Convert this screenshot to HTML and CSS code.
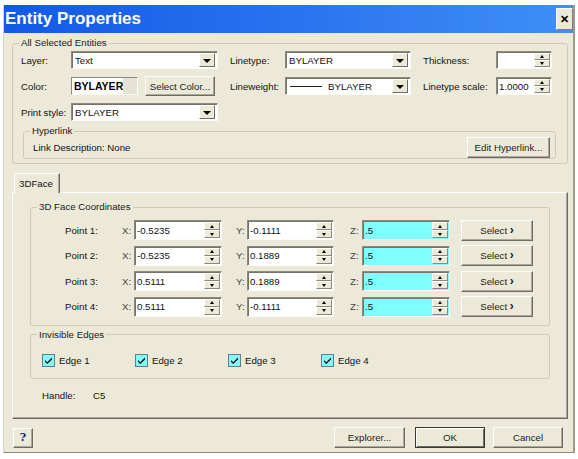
FILE: index.html
```html
<!DOCTYPE html>
<html>
<head>
<meta charset="utf-8">
<link rel="stylesheet" href="styles.css">
</head>
<body>
<div class="window">
  <div class="titlebar">
    <span class="title">Entity Properties</span>
    <span class="close">&#x2715;</span>
  </div>
  <div class="content">
    <fieldset class="group g-all">
      <legend>All Selected Entities</legend>
      <div class="props">
        <span class="lbl">Layer:</span>
        <div class="combo w147"><span class="val">Text</span><i class="drop"></i></div>
        <span class="lbl">Linetype:</span>
        <div class="combo w126"><span class="val">BYLAYER</span><i class="drop"></i></div>
        <span class="lbl">Thickness:</span>
        <div class="spin"><span class="val"></span><span class="spinbtns"><b class="up"></b><b class="dn"></b></span></div>

        <span class="lbl">Color:</span>
        <div class="colorrow">
          <div class="colorbox"><span class="cbtext">BYLAYER</span><span class="cbswatch"></span></div>
          <button class="btn btn-color">Select Color...</button>
        </div>
        <span class="lbl">Lineweight:</span>
        <div class="combo w126"><span class="val lw"><span class="lwline"></span>BYLAYER</span><i class="drop"></i></div>
        <span class="lbl">Linetype scale:</span>
        <div class="spin"><span class="val">1.0000</span><span class="spinbtns"><b class="up"></b><b class="dn"></b></span></div>

        <span class="lbl">Print style:</span>
        <div class="combo w147"><span class="val">BYLAYER</span><i class="drop"></i></div>
      </div>
      <fieldset class="group g-link">
        <legend>Hyperlink</legend>
        <div class="linkrow">
          <span>Link Description: None</span>
          <button class="btn btn-link">Edit Hyperlink...</button>
        </div>
      </fieldset>
    </fieldset>

    <div class="tabs"><div class="tab">3DFace</div></div>
    <div class="panel">
      <fieldset class="group g-coords">
        <legend>3D Face Coordinates</legend>
        <div class="coords">
          <span>Point 1:</span><span class="axis">X:</span>
          <div class="num"><span class="val">-0.5235</span><span class="spinbtns"><b class="up"></b><b class="dn"></b></span></div>
          <span class="axis ylbl">Y:</span>
          <div class="num"><span class="val">-0.1111</span><span class="spinbtns"><b class="up"></b><b class="dn"></b></span></div>
          <span class="axis zlbl">Z:</span>
          <div class="num cyan"><span class="val">.5</span><span class="spinbtns"><b class="up"></b><b class="dn"></b></span></div>
          <button class="btn btn-sel">Select <span class="chev">&#x203A;</span></button>

          <span>Point 2:</span><span class="axis">X:</span>
          <div class="num"><span class="val">-0.5235</span><span class="spinbtns"><b class="up"></b><b class="dn"></b></span></div>
          <span class="axis ylbl">Y:</span>
          <div class="num"><span class="val">0.1889</span><span class="spinbtns"><b class="up"></b><b class="dn"></b></span></div>
          <span class="axis zlbl">Z:</span>
          <div class="num cyan"><span class="val">.5</span><span class="spinbtns"><b class="up"></b><b class="dn"></b></span></div>
          <button class="btn btn-sel">Select <span class="chev">&#x203A;</span></button>

          <span>Point 3:</span><span class="axis">X:</span>
          <div class="num"><span class="val">0.5111</span><span class="spinbtns"><b class="up"></b><b class="dn"></b></span></div>
          <span class="axis ylbl">Y:</span>
          <div class="num"><span class="val">0.1889</span><span class="spinbtns"><b class="up"></b><b class="dn"></b></span></div>
          <span class="axis zlbl">Z:</span>
          <div class="num cyan"><span class="val">.5</span><span class="spinbtns"><b class="up"></b><b class="dn"></b></span></div>
          <button class="btn btn-sel">Select <span class="chev">&#x203A;</span></button>

          <span>Point 4:</span><span class="axis">X:</span>
          <div class="num"><span class="val">0.5111</span><span class="spinbtns"><b class="up"></b><b class="dn"></b></span></div>
          <span class="axis ylbl">Y:</span>
          <div class="num"><span class="val">-0.1111</span><span class="spinbtns"><b class="up"></b><b class="dn"></b></span></div>
          <span class="axis zlbl">Z:</span>
          <div class="num cyan"><span class="val">.5</span><span class="spinbtns"><b class="up"></b><b class="dn"></b></span></div>
          <button class="btn btn-sel">Select <span class="chev">&#x203A;</span></button>
        </div>
      </fieldset>
      <fieldset class="group g-edges">
        <legend>Invisible Edges</legend>
        <div class="edges">
          <label class="chk"><svg width="13" height="13" viewBox="0 0 13 13"><rect x="0.5" y="0.5" width="12" height="12" fill="#86f7f7" stroke="#5d7f8f"/><path d="M3 6 L5.2 8.3 L10 3.6 L10 5.4 L5.2 10.1 L3 7.8 Z" fill="#111"/></svg>Edge 1</label>
          <label class="chk"><svg width="13" height="13" viewBox="0 0 13 13"><rect x="0.5" y="0.5" width="12" height="12" fill="#86f7f7" stroke="#5d7f8f"/><path d="M3 6 L5.2 8.3 L10 3.6 L10 5.4 L5.2 10.1 L3 7.8 Z" fill="#111"/></svg>Edge 2</label>
          <label class="chk"><svg width="13" height="13" viewBox="0 0 13 13"><rect x="0.5" y="0.5" width="12" height="12" fill="#86f7f7" stroke="#5d7f8f"/><path d="M3 6 L5.2 8.3 L10 3.6 L10 5.4 L5.2 10.1 L3 7.8 Z" fill="#111"/></svg>Edge 3</label>
          <label class="chk"><svg width="13" height="13" viewBox="0 0 13 13"><rect x="0.5" y="0.5" width="12" height="12" fill="#86f7f7" stroke="#5d7f8f"/><path d="M3 6 L5.2 8.3 L10 3.6 L10 5.4 L5.2 10.1 L3 7.8 Z" fill="#111"/></svg>Edge 4</label>
        </div>
      </fieldset>
      <div class="handle"><span class="hlbl">Handle:</span><span>C5</span></div>
    </div>

    <div class="bottombar">
      <button class="btn btn-help">?</button>
      <span class="spacer"></span>
      <button class="btn btn-bot">Explorer...</button>
      <button class="btn btn-bot btn-ok">OK</button>
      <button class="btn btn-bot">Cancel</button>
    </div>
  </div>
</div>
</body>
</html>
```

FILE: styles.css
```css
* { box-sizing: border-box; }
html, body { margin: 0; padding: 0; background: #fff; }
body {
  font-family: "Liberation Sans", Arial, sans-serif;
  font-size: 9.7px;
  color: #111;
}

.window {
  margin: 5px 0 0 3px;
  width: 572px;
  height: 448px;
  background: #ece9d8;
  border-left: 1px solid #d8d5c6;
  border-right: 2px solid #9c9a8e;
  border-bottom: 1px solid #8a887c;
  display: flex;
  flex-direction: column;
}

.titlebar {
  height: 28px;
  flex: none;
  background: linear-gradient(90deg, #1359e4 0%, #2a72f0 50%, #3f8ff6 100%);
  display: flex;
  align-items: center;
  justify-content: space-between;
  padding: 0 0 0 1px;
}
.title {
  color: #fff;
  font-weight: bold;
  font-size: 17px;
}
.close {
  width: 17px;
  height: 22px;
  background: #ece9d8;
  border: 1px solid;
  border-color: #fff #7f7d72 #7f7d72 #fff;
  display: flex;
  align-items: center;
  justify-content: center;
  font-weight: bold;
  font-size: 11px;
  color: #000;
}

.content {
  flex: 1;
  padding: 4px 5px 0 8px;
  display: flex;
  flex-direction: column;
}

fieldset.group {
  margin: 0;
  padding: 0;
  border: 1px solid #cdcab9;
  border-radius: 3px;
  min-width: 0;
}
fieldset.group > legend {
  padding: 0 2px;
  margin-left: 6px;
  line-height: 12px;
  color: #1a1a1a;
}

fieldset.g-all { padding: 0 0 4px 0; }

.props {
  display: grid;
  grid-template-columns: 50px 159px 55px 138px 73px 56px;
  grid-auto-rows: 18px;
  row-gap: 8px;
  padding: 2px 0 0 8px;
  align-items: center;
}
.lbl { white-space: nowrap; }

.combo {
  height: 18px;
  background: #fff;
  border: 1px solid;
  border-color: #8d8a7e #fbfbf8 #fbfbf8 #8d8a7e;
  box-shadow: inset 1px 1px 0 #77756b;
  display: flex;
  align-items: center;
  padding: 2px 2px 2px 3px;
}
.combo.w147 { width: 147px; }
.combo.w126 { width: 126px; }
.combo .val { flex: 1; white-space: nowrap; }
.drop {
  width: 16px;
  height: 14px;
  background: #ece9d8;
  border: 1px solid;
  border-color: #fff #6e6c62 #6e6c62 #fff;
  display: flex;
  align-items: center;
  justify-content: center;
}
.drop::after {
  content: "";
  border-left: 4px solid transparent;
  border-right: 4px solid transparent;
  border-top: 4px solid #000;
  margin-top: 1px;
}
.lw { display: flex; align-items: center; }
.lwline {
  width: 32px;
  height: 1px;
  background: #222;
  margin: 0 6px 0 1px;
}

.spin, .num {
  height: 18px;
  background: #fff;
  border: 1px solid;
  border-color: #8d8a7e #fbfbf8 #fbfbf8 #8d8a7e;
  box-shadow: inset 1px 1px 0 #77756b;
  display: flex;
  align-items: stretch;
  padding: 1px 1px 1px 2px;
}
.spin { width: 56px; }
.spin .val, .num .val {
  flex: 1;
  display: flex;
  align-items: center;
  white-space: nowrap;
}
.spinbtns {
  width: 16px;
  display: flex;
  flex-direction: column;
  background: #ece9d8;
}
.spinbtns b {
  flex: 1;
  display: flex;
  align-items: center;
  justify-content: center;
  border: 1px solid;
  border-color: #fff #8a887c #8a887c #fff;
}
.spinbtns b.up::after {
  content: "";
  border-left: 2.5px solid transparent;
  border-right: 2.5px solid transparent;
  border-bottom: 3px solid #000;
}
.spinbtns b.dn::after {
  content: "";
  border-left: 2.5px solid transparent;
  border-right: 2.5px solid transparent;
  border-top: 3px solid #000;
}

.colorrow {
  display: flex;
  align-items: center;
  gap: 7px;
}
.colorbox {
  width: 67px;
  height: 18px;
  border: 1px solid;
  border-color: #8d8a7e #fbfbf8 #fbfbf8 #8d8a7e;
  display: flex;
  background: #fff;
}
.cbtext {
  flex: 1;
  font-weight: bold;
  font-size: 10.5px;
  display: flex;
  align-items: center;
  padding-left: 2px;
  color: #000;
}
.cbswatch {
  width: 14px;
  background: #e6e3d6;
}

.btn {
  font-family: inherit;
  font-size: 9.7px;
  color: #222;
  background: #ece9d8;
  border: 1px solid;
  border-color: #fdfdfb #6e6c62 #6e6c62 #fdfdfb;
  box-shadow: inset -1px -1px 0 #aca899;
  padding: 0;
  margin: 0;
}
.btn-color { width: 70px; height: 20px; }

fieldset.g-link {
  margin: 4px 11px 0 10px;
}
.linkrow {
  height: 21px;
  display: flex;
  align-items: center;
  justify-content: space-between;
  padding: 0 5px 0 9px;
}
.btn-link { width: 83px; height: 21px; }

.tabs {
  margin-top: 9px;
  display: flex;
  padding-left: 2px;
  position: relative;
  z-index: 1;
}
.tab {
  width: 46px;
  height: 20px;
  margin-bottom: -1px;
  background: #ece9d8;
  border-top: 1px solid #fff;
  border-left: 1px solid #fff;
  border-right: 1px solid #6e6c62;
  box-shadow: inset -1px 0 0 #aca899;
  padding: 4px 0 0 4px;
}
.panel {
  height: 227px;
  border: 1px solid;
  border-color: #fff #6e6c62 #6e6c62 #fff;
  box-shadow: inset -1px -1px 0 #aca899;
  padding: 8px 17px 0 17px;
  display: flex;
  flex-direction: column;
}

fieldset.g-coords { padding-bottom: 8px; }
.coords {
  display: grid;
  grid-template-columns: 57px 12px 88px 25px 87px 28px 88px 83px;
  grid-auto-rows: 20px;
  row-gap: 5.5px;
  padding: 7px 0 0 34px;
  align-items: center;
}
.axis { color: #444; }
.num { height: 20px; }
.num.cyan, .num.cyan .val { background: #80ffff; }
.ylbl { padding-left: 14px; }
.zlbl { padding-left: 16px; }
.btn-sel {
  justify-self: end;
  width: 72px;
  height: 21px;
}
.chev {
  font-weight: bold;
  font-size: 12px;
  line-height: 8px;
}

fieldset.g-edges { margin-top: 3px; }
.edges {
  display: flex;
  padding: 13px 0 11px 11px;
}
.chk {
  width: 93px;
  display: flex;
  align-items: center;
  gap: 4px;
}
.chk svg { flex: none; }

.handle {
  margin-top: 11px;
  padding-left: 12px;
  line-height: 12px;
}
.hlbl { display: inline-block; width: 51px; }

.bottombar {
  margin-top: 8px;
  display: flex;
  align-items: center;
  padding-right: 5px;
}
.spacer { flex: 1; }
.btn-help {
  width: 20px;
  height: 20px;
  margin-left: 1px;
  font-family: "DejaVu Serif", "Liberation Serif", serif;
  font-weight: bold;
  font-size: 11px;
  color: #1a2a78;
}
.btn-bot { width: 71px; height: 21px; margin-left: 10px; }
.btn-ok {
  width: 70px;
  border: 1px solid #3a3830;
  box-shadow: inset 1px 1px 0 #fff, inset -1px -1px 0 #6e6c62;
}
.btn-bot:last-child { width: 70px; margin-left: 8px; }
```
